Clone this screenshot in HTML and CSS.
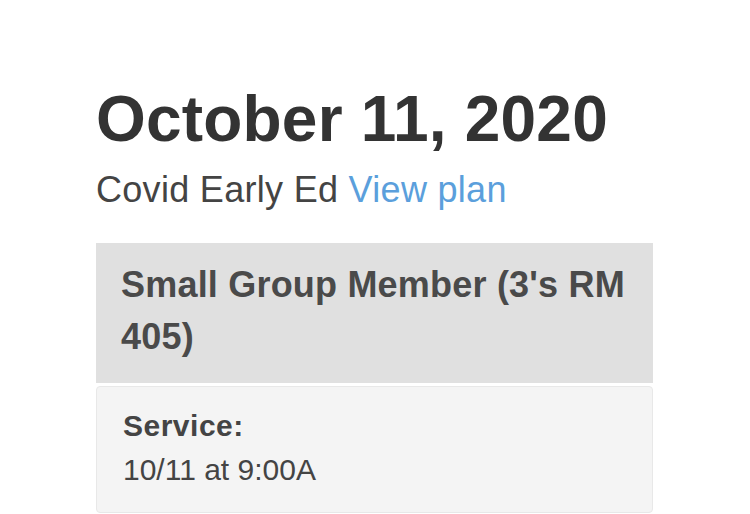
FILE: index.html
```html
<!doctype html>
<html lang="en">
 <head>
  <meta charset="UTF-8">
  <meta name="viewport" content="width=device-width, initial-scale=1.0">
  <title>October 11, 2020</title>
  <link rel="stylesheet" href="styles.css">
 </head>
 <body>
  <div class="page">
   <h1 class="date">October 11, 2020</h1>
   <p class="plan">Covid Early Ed <a href="#">View plan</a></p>

   <!-- position card -->
   <div class="position">
    <div class="position-title">Small Group Member (3's RM 405)</div>
    <div class="position-body">
     <div class="label">Service:</div>
     <div class="time">10/11 at 9:00A</div>
    </div>
   </div>
  </div>
 </body>
</html>
```

FILE: styles.css
```css
body {
    margin: 0;
    background: #fff;
    font-family: "Liberation Sans", Arial, sans-serif;
}
.page {
    width: 557px;
    padding: 83px 0 0 96px;
}
.date {
    margin: 0;
    font-size: 64px;
    line-height: 72px;
    font-weight: bold;
    letter-spacing: 0.2px;
    color: #333;
}
.plan {
    margin: 13px 0 0;
    font-size: 36px;
    line-height: 44px;
    letter-spacing: 0.3px;
    color: #444;
}
.plan a {
    color: #5b9fdc;
    text-decoration: none;
}
.position {
    margin-top: 31px;
}
.position-title {
    background: #e0e0e0;
    color: #4a4a4a;
    font-size: 36px;
    line-height: 52px;
    font-weight: bold;
    letter-spacing: 0.2px;
    padding: 16px 25px 20px 25px;
}
.position-body {
    margin-top: 3px;
    background: #f4f4f4;
    border: 1px solid #e8e8e8;
    border-radius: 4px;
    padding: 17px 26px 20px 26px;
    color: #444;
}
.label {
    font-size: 30px;
    line-height: 44px;
    font-weight: bold;
    letter-spacing: 0.5px;
}
.time {
    font-size: 30px;
    line-height: 44px;
}
```
